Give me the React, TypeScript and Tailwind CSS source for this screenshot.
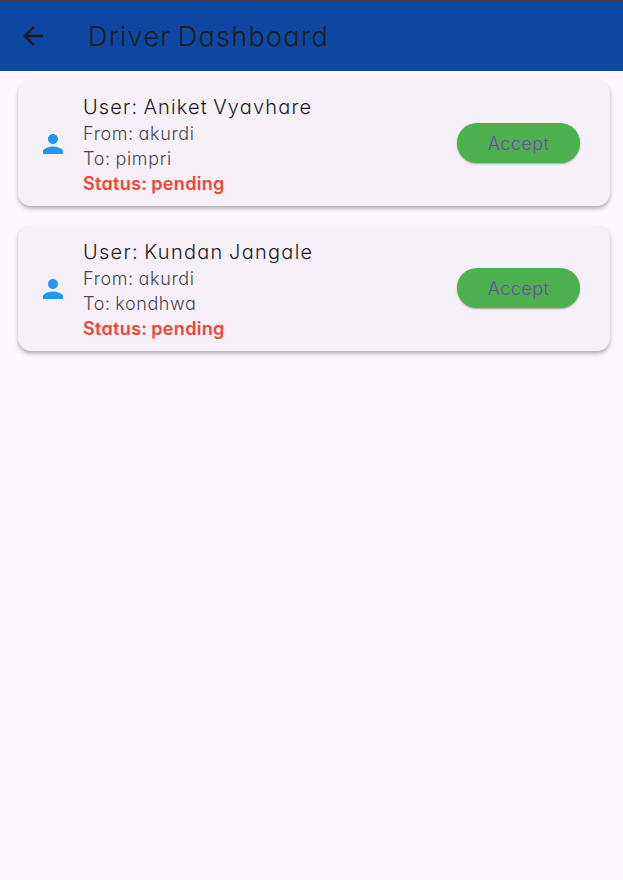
type Ride = { user: string; from: string; to: string; userClass: string; toClass: string };

const rides: Ride[] = [
  { user: "Aniket Vyavhare", from: "akurdi", to: "pimpri", userClass: "tracking-[1.15px]", toClass: "tracking-[0.65px]" },
  { user: "Kundan Jangale", from: "akurdi", to: "kondhwa", userClass: "tracking-[1.28px]", toClass: "tracking-[0.6px]" },
];

function RideCard({ ride }: { ride: Ride }) {
  return (
    <article className="flex h-[126px] items-center rounded-[13px] bg-[#f6f1f8] pl-5 pr-[30px] pt-[2px] shadow-[0_3px_4px_rgba(0,0,0,0.25),0_1px_2px_rgba(0,0,0,0.08)]">
      <svg className="size-[30px] shrink-0 fill-[#2196f3]" viewBox="0 0 24 24">
        <path d="M12 12c2.21 0 4-1.79 4-4s-1.79-4-4-4-4 1.79-4 4 1.79 4 4 4zm0 2c-2.67 0-8 1.34-8 4v2h16v-2c0-2.66-5.33-4-8-4z" />
      </svg>
      <div className="ml-[15px] flex-1 whitespace-nowrap text-[18px] font-[350] leading-[25px] text-[#49454f] [word-spacing:-1px]">
        <h2 className={`text-[20px] leading-[28px] text-[#1d1b20] [word-spacing:-1.5px] ${ride.userClass}`}>User: {ride.user}</h2>
        <p className="tracking-[0.65px]">From: {ride.from}</p>
        <p className={ride.toClass}>To: {ride.to}</p>
        <p className="font-semibold tracking-[0.33px] text-[#f44336]">Status: pending</p>
      </div>
      <button className="-mt-[2px] h-10 w-[123px] rounded-full bg-[#4caf50] pt-px text-[18px] font-[340] tracking-[0.45px] text-[#6750a4] shadow-[0_1px_2px_rgba(0,0,0,0.35)]">
        Accept
      </button>
    </article>
  );
}

export default function App() {
  return (
    <div className="min-h-screen bg-[#fef7ff] font-['Inter','Liberation_Sans',sans-serif] antialiased [font-feature-settings:'cv11']">
      <header className="flex h-[71px] items-center border-t border-[#424242] bg-[#0d47a1] pl-[18px] text-[#1d1b20]">
        <svg className="size-[30px] fill-current" viewBox="0 0 24 24">
          <path d="M20 11H7.83l5.59-5.59L12 4l-8 8 8 8 1.41-1.41L7.83 13H20v-2z" />
        </svg>
        <h1 className="ml-10 whitespace-nowrap pt-px text-[27px] font-[350] leading-9 tracking-[1.3px] [word-spacing:-2.5px]">Driver Dashboard</h1>
      </header>
      <main className="flex flex-col gap-[19px] pl-[18px] pr-[13px] pt-[9px]">
        {rides.map((ride) => (
          <RideCard key={ride.user} ride={ride} />
        ))}
      </main>
    </div>
  );
}
